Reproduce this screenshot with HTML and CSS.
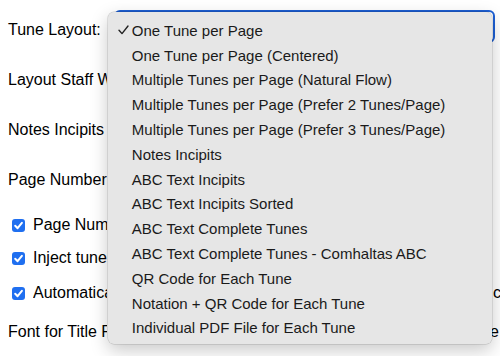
FILE: index.html
```html
<!DOCTYPE html>
<html lang="en">
<head>
<meta charset="utf-8">
<title>PDF Settings</title>
<link rel="stylesheet" href="styles.css">
</head>
<body>
<form class="settings">
  <div class="row row-layout">
    <span class="lbl">Tune Layout:</span>
    <div class="select-wrap">
      <div class="select"></div>
      <ul class="menu">
        <li class="item selected"><span class="tick"><svg width="11" height="10" viewBox="0 0 11 10"><polyline points="1,5.2 4,8.6 10,1" fill="none" stroke="#222" stroke-width="1.4" stroke-linecap="round" stroke-linejoin="round"/></svg></span>One Tune per Page</li>
        <li class="item"><span class="tick"></span>One Tune per Page (Centered)</li>
        <li class="item"><span class="tick"></span>Multiple Tunes per Page (Natural Flow)</li>
        <li class="item"><span class="tick"></span>Multiple Tunes per Page (Prefer 2 Tunes/Page)</li>
        <li class="item"><span class="tick"></span>Multiple Tunes per Page (Prefer 3 Tunes/Page)</li>
        <li class="item"><span class="tick"></span>Notes Incipits</li>
        <li class="item"><span class="tick"></span>ABC Text Incipits</li>
        <li class="item"><span class="tick"></span>ABC Text Incipits Sorted</li>
        <li class="item"><span class="tick"></span>ABC Text Complete Tunes</li>
        <li class="item"><span class="tick"></span>ABC Text Complete Tunes - Comhaltas ABC</li>
        <li class="item"><span class="tick"></span>QR Code for Each Tune</li>
        <li class="item"><span class="tick"></span>Notation + QR Code for Each Tune</li>
        <li class="item"><span class="tick"></span>Individual PDF File for Each Tune</li>
      </ul>
    </div>
  </div>
  <div class="row"><span class="lbl clip">Layout Staff Width:</span></div>
  <div class="row"><span class="lbl clip">Notes Incipits Length:</span></div>
  <div class="row"><span class="lbl clip">Page Number Location:</span></div>
  <div class="check-row cr1"><span class="box"><svg width="13" height="13" viewBox="0 0 13 13"><rect width="13" height="13" rx="3" fill="#1f6ff0"/><polyline points="3.2,6.8 5.6,9.2 9.9,3.8" fill="none" stroke="#fff" stroke-width="2" stroke-linecap="round" stroke-linejoin="round"/></svg></span><span class="lbl clip-c">Page Number on first page</span></div>
  <div class="check-row cr2"><span class="box"><svg width="13" height="13" viewBox="0 0 13 13"><rect width="13" height="13" rx="3" fill="#1f6ff0"/><polyline points="3.2,6.8 5.6,9.2 9.9,3.8" fill="none" stroke="#fff" stroke-width="2" stroke-linecap="round" stroke-linejoin="round"/></svg></span><span class="lbl clip-c">Inject tune numbers</span></div>
  <div class="check-row cr3"><span class="box"><svg width="13" height="13" viewBox="0 0 13 13"><rect width="13" height="13" rx="3" fill="#1f6ff0"/><polyline points="3.2,6.8 5.6,9.2 9.9,3.8" fill="none" stroke="#fff" stroke-width="2" stroke-linecap="round" stroke-linejoin="round"/></svg></span><span class="lbl clip-c">Automatically inject tune index</span><span class="tail tail-c">c</span></div>
  <div class="row-font"><span class="lbl clip">Font for Title Page</span><span class="tail tail-e">e</span></div>
</form>
</body>
</html>
```
FILE: styles.css
```css
html, body {
  margin: 0;
  padding: 0;
  background: #fff;
  overflow: hidden;
}
body {
  width: 500px;
  height: 356px;
  font-family: "Liberation Sans", Arial, sans-serif;
  color: #000;
}
.settings {
  padding: 5px 0 0 8px;
  display: flex;
  flex-direction: column;
}
.lbl {
  font-size: 16px;
  line-height: 18px;
  white-space: nowrap;
}
.clip {
  max-width: 99px;
  overflow: hidden;
}
.clip-c {
  max-width: 74px;
  overflow: hidden;
}
.row {
  display: flex;
  align-items: center;
  height: 50px;
}
.row-layout {
  align-items: flex-start;
}
.row-layout .lbl {
  margin-top: 16px;
}
.select-wrap {
  position: relative;
  margin-left: 13px;
  margin-top: 5px;
  width: 381px;
  height: 33px;
}
.select {
  box-sizing: border-box;
  width: 100%;
  height: 33px;
  border: 2px solid #1d5fd3;
  border-radius: 6px;
}
.menu {
  position: absolute;
  left: -6px;
  top: 2px;
  width: 384px;
  margin: 0;
  padding: 6px 0 4px;
  list-style: none;
  background: #e6e6e6;
  border-radius: 6px;
  box-shadow: 0 0 0 0.5px rgba(0,0,0,0.18), 0 6px 18px rgba(0,0,0,0.22);
  z-index: 2;
}
.item {
  display: flex;
  align-items: center;
  height: 24.8px;
  font-size: 15px;
  color: #1a1a1a;
  white-space: nowrap;
}
.tick {
  display: flex;
  align-items: center;
  width: 14px;
  padding-left: 10px;
  height: 100%;
}
.check-row {
  display: flex;
  align-items: center;
  height: 20px;
  padding-left: 4px;
}
.cr1 { margin-top: 10px; }
.cr2 { margin-top: 13px; }
.cr3 { margin-top: 15px; }
.box {
  display: flex;
  width: 13px;
  height: 13px;
  margin-right: 8px;
}
.tail {
  margin-left: auto;
  font-size: 16px;
  line-height: 18px;
}
.tail-c {
  margin-right: -1px;
}
.row-font {
  display: flex;
  align-items: center;
  height: 20px;
  margin-top: 19px;
}
.tail-e {
  margin-right: 1px;
}
```
